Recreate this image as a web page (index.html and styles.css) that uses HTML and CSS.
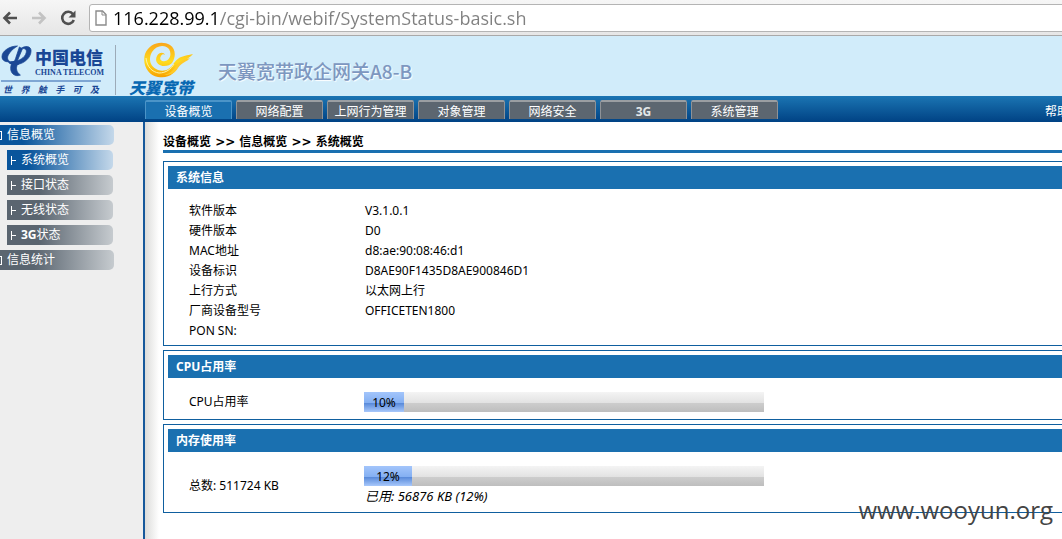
FILE: index.html
```
<!DOCTYPE html>
<html lang="zh-CN">
<head>
    <meta charset="UTF-8">
    <meta name="viewport" content="width=device-width, initial-scale=1.0">
    <title>天翼宽带政企网关A8-B</title>
    <link rel="stylesheet" href="styles.css">
</head>
<body>

<!-- browser toolbar -->
<div class="toolbar">
    <button type="button" class="tool" aria-label="后退">
        <svg width="16" height="16" viewBox="0 0 16 16"><path d="M15 8H3M8 2.5L2.5 8L8 13.5" fill="none" stroke="#505050" stroke-width="2.6"/></svg>
    </button>
    <button type="button" class="tool" aria-label="前进">
        <svg width="16" height="16" viewBox="0 0 16 16"><path d="M1 8H13M8 2.5L13.5 8L8 13.5" fill="none" stroke="#c3c3c3" stroke-width="2.6"/></svg>
    </button>
    <button type="button" class="tool" aria-label="刷新">
        <svg width="16" height="16" viewBox="0 0 16 16"><path d="M13 4.2A6 6 0 1 0 13.8 10" fill="none" stroke="#505050" stroke-width="2.6"/><path d="M15.5 0.5V7.5H8.5Z" fill="#505050"/></svg>
    </button>
    <div class="address">
        <svg width="12" height="16" viewBox="0 0 12 16"><path d="M1 1H7.5L11 4.5V15H1Z" fill="#fff" stroke="#8c8c8c" stroke-width="1.4"/><path d="M7 1V5H11" fill="none" stroke="#8c8c8c"/></svg>
        <input type="text" class="url" aria-label="地址" value="116.228.99.1/cgi-bin/webif/SystemStatus-basic.sh">
    </div>
</div>

<div class="page">
    <header class="header">
        <div class="telecom">
            <div class="telecom-top">
                <svg width="31" height="33" viewBox="0 0 32 34">
                    <g fill="#1a4795" stroke="#1a4795" stroke-width="0.8">
                        <path d="M17 1C9 1 1 6 1 12C1 16 5 18 9 17C6 15 6 12 9 8C11 5 14 3 17 1Z"/>
                        <path d="M19 2L15 14C14 17 13 18 10 17L9 19C12 20 15 19 17 16L22 4Z"/>
                        <path d="M20 4C25 0 31 1 31 6C31 13 24 19 17 20C15 24 16 28 20 31C15 33 10 30 10 24C10 21 11 19 12 17C18 17 25 13 26 8C27 4 24 3 20 4Z"/>
                        <path d="M7 17C10 20 14 21 18 20L16 17C13 18 10 18 7 17Z"/>
                    </g>
                </svg>
                <div class="telecom-name">
                    <strong>中国电信</strong>
                    <span>CHINA TELECOM</span>
                </div>
            </div>
            <div class="slogan"><i>世</i><i>界</i><i>触</i><i>手</i><i>可</i><i>及</i></div>
        </div>
        <div class="surfing">
            <svg width="52" height="37" viewBox="0 0 52 37">
                <defs>
                    <linearGradient id="gold" x1="0" y1="0" x2="0" y2="1">
                        <stop offset="0" stop-color="#f9a51a"/>
                        <stop offset="0.55" stop-color="#ffdc1e"/>
                        <stop offset="1" stop-color="#f7a000"/>
                    </linearGradient>
                </defs>
                <path d="M30 22C34 16 34 8 28 4C20 -1 7 2 3 13C0 24 6 34 16 36C28 38 33 31 36 26C40 19 46 19 51 13C42 15 37 15 32 22C28 29 22 31 16 29C8 26 6 18 10 11C14 4 23 3 27 8C30 13 28 19 23 20C19 21 17 18 19 15C20 13 22 13 23 14C22 11 17 11 15 15C12 21 17 25 22 25C26 25 28 24 30 22Z" fill="url(#gold)"/>
                <path d="M36 27C40 21 45 21 48 17C44 18 39 19 35 24C31 30 27 33 22 34C29 34 33 32 36 27Z" fill="#ffca28"/>
                <path d="M4 17C5 26 10 31 17 32C24 32 29 28 32 23" fill="none" stroke="#fff3a0" stroke-width="1"/>
            </svg>
            <strong>天翼宽带</strong>
        </div>
        <h1>天翼宽带政企网关A8-B</h1>
    </header>

    <nav class="nav">
        <a href="#" class="tab active">设备概览</a>
        <a href="#" class="tab">网络配置</a>
        <a href="#" class="tab">上网行为管理</a>
        <a href="#" class="tab">对象管理</a>
        <a href="#" class="tab">网络安全</a>
        <a href="#" class="tab bold">3G</a>
        <a href="#" class="tab">系统管理</a>
        <a href="#" class="help">帮助</a>
    </nav>

    <div class="body">
        <aside class="side">
            <a href="#" class="menu active"><span class="box"></span>信息概览</a>
            <a href="#" class="menu sub active"><span class="branch"></span>系统概览</a>
            <a href="#" class="menu sub"><span class="branch"></span>接口状态</a>
            <a href="#" class="menu sub"><span class="branch"></span>无线状态</a>
            <a href="#" class="menu sub"><span class="branch"></span><b>3G</b>状态</a>
            <a href="#" class="menu"><span class="box"></span>信息统计</a>
        </aside>

        <main class="main">
            <div class="crumbs">设备概览 <span>&gt;&gt;</span> 信息概览 <span>&gt;&gt;</span> 系统概览</div>

            <section class="panel">
                <h2>系统信息</h2>
                <table class="info">
                    <tr><th scope="row">软件版本</th><td>V3.1.0.1</td></tr>
                    <tr><th scope="row">硬件版本</th><td>D0</td></tr>
                    <tr><th scope="row">MAC地址</th><td>d8:ae:90:08:46:d1</td></tr>
                    <tr><th scope="row">设备标识</th><td>D8AE90F1435D8AE900846D1</td></tr>
                    <tr><th scope="row">上行方式</th><td>以太网上行</td></tr>
                    <tr><th scope="row">厂商设备型号</th><td>OFFICETEN1800</td></tr>
                    <tr><th scope="row">PON SN:</th><td></td></tr>
                </table>
            </section>

            <section class="panel">
                <h2>CPU占用率</h2>
                <table class="info usage">
                    <tr>
                        <th scope="row">CPU占用率</th>
                        <td><div class="bar"><div class="fill" style="width: 10%">10%</div></div></td>
                    </tr>
                </table>
            </section>

            <section class="panel">
                <h2>内存使用率</h2>
                <table class="info usage">
                    <tr>
                        <th scope="row">总数: 511724 KB</th>
                        <td>
                            <div class="bar"><div class="fill" style="width: 12%">12%</div></div>
                            <em>已用: 56876 KB (12%)</em>
                        </td>
                    </tr>
                </table>
            </section>
        </main>
    </div>
</div>

<div class="watermark">www.wooyun.org</div>

</body>
</html>
```
FILE: styles.css
```
* {
    box-sizing: border-box;
}

body {
    margin: 0;
    min-height: 100vh;
    position: relative;
    overflow: hidden;
    background: #fff;
    color: #000;
    font: 12px/20px "Noto Sans", "Noto Sans CJK SC", sans-serif;
    display: flex;
    flex-direction: column;
}

a {
    color: #fff;
    text-decoration: none;
}

/* toolbar */
.toolbar {
    display: flex;
    align-items: center;
    height: 36px;
    padding-left: 2px;
    background: linear-gradient(#f6f6f6, #e6e6e6);
    border-bottom: 1px solid #a9a9a9;
}

.tool {
    display: flex;
    width: 16px;
    margin-right: 13px;
    padding: 0;
    border: 0;
    background: none;
}

.tool svg {
    flex: none;
}

.address {
    flex: 1;
    display: flex;
    align-items: center;
    gap: 6px;
    height: 28px;
    margin-right: -10px;
    padding-left: 5px;
    border: 1px solid #b4b4b4;
    border-radius: 3px;
    background: #fff;
}

/* host is black, the path is grey */
.url {
    flex: 1;
    height: 24px;
    padding: 0;
    border: 0;
    outline: 0;
    font: 18px/24px "Open Sans", sans-serif;
    color: transparent;
    background: linear-gradient(90deg, #000 106px, #808080 106px);
    -webkit-background-clip: text;
    background-clip: text;
}

/* the page is a little wider than the window */
.page {
    flex: 1;
    display: flex;
    flex-direction: column;
    width: calc(100% + 20px);
}

.header {
    display: flex;
    height: 60px;
    background: #d1ecfa;
}

.telecom {
    width: 116px;
    margin: 9px 0 1px;
    padding: 0 14px 0 1px;
    border-right: 1px solid #9cabb8;
    color: #1a4795;
}

.telecom-top {
    display: flex;
    gap: 3px;
    height: 37px;
    border-bottom: 2px solid #7ea6d3;
}

.telecom-top svg {
    flex: none;
}

.telecom-name {
    display: flex;
    flex-direction: column;
    white-space: nowrap;
}

.telecom-name strong {
    font: 900 17px/23px "Noto Sans CJK SC", sans-serif;
}

.telecom-name span {
    font: bold 8px/9px "Liberation Serif", serif;
}

.slogan {
    display: flex;
    justify-content: space-between;
    padding: 0 2px;
    font: bold 9px/15px "Noto Sans CJK SC", sans-serif;
}

.surfing {
    display: flex;
    flex-direction: column;
    align-items: center;
    width: 90px;
    padding-top: 5px;
}

.surfing svg {
    margin-left: 14px;
}

.surfing strong {
    color: #0868b2;
    font: italic 900 16px/18px "Noto Sans CJK SC", sans-serif;
}

.header h1 {
    margin: 0 0 0 12px;
    color: #7d97c0;
    font: 500 19px/70px "Noto Sans CJK SC", sans-serif;
    text-shadow: 1px 1px 1px #fff;
}

.nav {
    display: flex;
    gap: 4px;
    height: 26px;
    padding: 4px 0 3px 145px;
    background: linear-gradient(#1b75b3, #004284);
}

.tab {
    width: 87px;
    border: 1px solid #8e9297;
    border-top: 2px solid #9a9ea2;
    border-bottom: 0;
    border-radius: 2px 2px 0 0;
    background: #5c6670;
    text-align: center;
    line-height: 19px;
}

.tab.active {
    border-color: #4b94c8;
    background: #1a70b0;
}

.tab.bold {
    color: #e4e8ea;
    font-weight: bold;
}

.help {
    margin-left: auto;
    padding-right: 13px;
    line-height: 23px;
}

.body {
    flex: 1;
    display: flex;
}

.side {
    display: flex;
    flex-direction: column;
    gap: 5px;
    width: 145px;
    padding-top: 3px;
    background: #eee;
    border-right: 2px solid #16589b;
}

.menu {
    display: flex;
    align-items: center;
    gap: 5px;
    width: 114px;
    height: 20px;
    border-radius: 0 5px 5px 0;
    background: linear-gradient(90deg, #5a6570 30%, #c6cbcf);
}

.menu.sub {
    gap: 5px;
    width: 106px;
    margin-left: 7px;
    padding-left: 4px;
}

.menu.active {
    background: linear-gradient(90deg, #09559c 20%, #c4d8ea);
}

.menu b {
    margin-right: -5px;
}

.box {
    width: 2px;
    height: 9px;
    border: 1px solid #fff;
    border-left: 0;
}

.branch {
    width: 5px;
    height: 9px;
    border-left: 1px solid #fff;
    background: linear-gradient(#fff, #fff) 0 4px / 5px 1px no-repeat;
}

.main {
    flex: 1;
    padding: 10px 0 0 18px;
    background: linear-gradient(90deg, #dcdcda, #fff 14px);
}

.crumbs {
    height: 21px;
    margin-bottom: 8px;
    border-bottom: 3px solid #1a70b0;
    font-weight: bold;
}

.crumbs span {
    margin: 0 1px;
    font-family: "DejaVu Sans", sans-serif;
}

.panel {
    margin-bottom: 4px;
    padding: 4px;
    border: 1px solid #0f5f9f;
    background: #fff;
}

.panel h2 {
    margin: 0;
    padding-left: 8px;
    background: #1a70b0;
    color: #fff;
    font-size: 12px;
    line-height: 23px;
}

.info {
    width: 100%;
    margin-top: 12px;
    border-collapse: collapse;
    table-layout: fixed;
}

.info th {
    width: 196px;
    padding: 0 0 0 21px;
    font-weight: normal;
    text-align: left;
}

.info td {
    height: 20px;
    padding: 0 0 0 1px;
}

.usage {
    margin: 14px 0 3px;
}

.usage td {
    padding: 0;
}

.usage em {
    display: block;
    height: 19px;
    padding-left: 1px;
    font-size: 13px;
}

.bar {
    width: 400px;
    max-width: 100%;
    background: linear-gradient(#f4f4f4, #e2e2e2 11px, #cdcdcd 11px, #bebebe);
}

.fill {
    height: 20px;
    background: linear-gradient(#a3c5fb, #83aff2 11px, #5688d9 11px, #a8c8fb);
    text-align: center;
    line-height: 21px;
}

.watermark {
    position: absolute;
    right: 9px;
    bottom: 12px;
    color: #444;
    font: 24px/34px "Open Sans", sans-serif;
}
```
